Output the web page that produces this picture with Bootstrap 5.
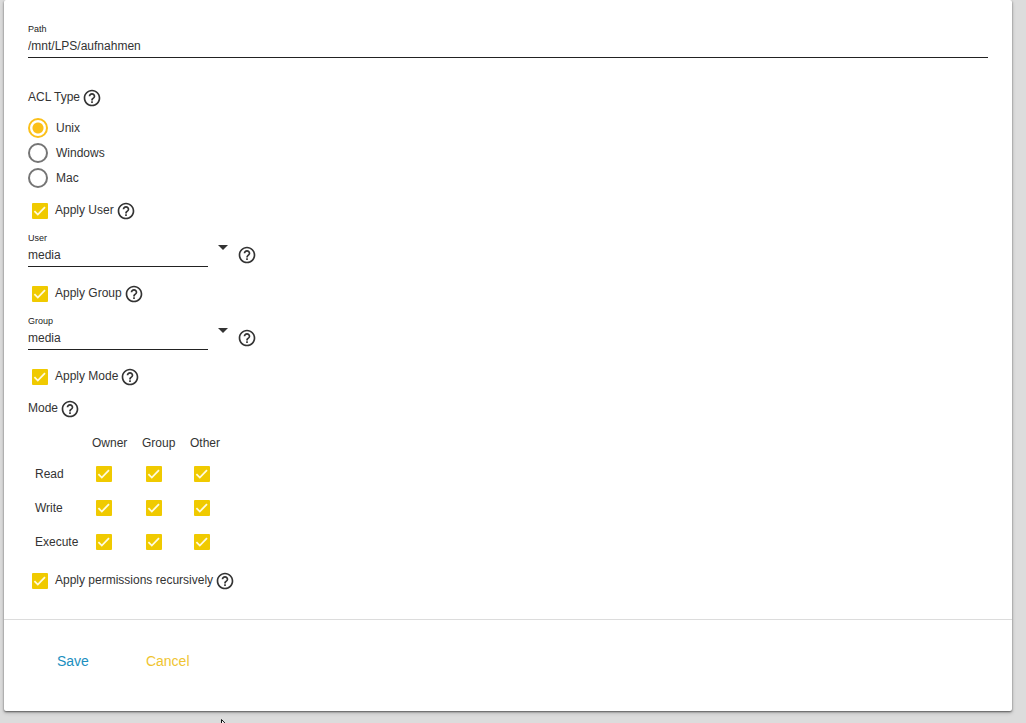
<!DOCTYPE html>
<html lang="en">
<head>
<meta charset="utf-8">
<meta name="viewport" content="width=device-width, initial-scale=1">
<title>Edit Permissions</title>
<link href="https://cdn.jsdelivr.net/npm/bootstrap@5.3.0/dist/css/bootstrap.min.css" rel="stylesheet">
<style>
  body { background: #dcdcdc; color: #333; font-family: "Liberation Sans", Arial, sans-serif; font-size: 12px; line-height: 18px; }
  .panel { margin: 0 14px 0 4px; border: 0; border-radius: 2px; color: #333; box-shadow: 0 1px 2px rgba(0,0,0,.55), 0 2px 4px rgba(0,0,0,.16); }
  .panel-main { padding: 23px 24px 28px; }
  .field-label { display: block; font-size: 9px; line-height: 12px; margin-bottom: 1px; color: #222; }
  .line-input { display: block; width: 100%; height: 22px; padding: 0 0 2px; border: 0; border-bottom: 1px solid #222; border-radius: 0; background: transparent; color: #333; outline: 0; }
  .combo { width: 180px; }
  .caret-btn { width: 10px; height: 5px; margin: 13px 0 0 10px; }
  .combo-row { margin: 11px 0 17px; }
  .combo-row .help { margin: 13px 0 0 9px; }
  .plain { border: 0; padding: 0; background: none; color: inherit; display: block; line-height: 0; }
  .help { width: 20px; height: 20px; margin-left: 2px; color: #333; }
  .opt-row { height: 20px; }
  .acl-row { margin: 30px 0 8px; }
  .acl-options { margin-bottom: 10px; }
  .radio-row { height: 25px; gap: 8px; }
  .radio-row label { line-height: 24px; }
  .radio-row .form-check-input { width: 20px; height: 20px; margin: 2px 0 0; border: 2px solid #757575; box-shadow: none; }
  .radio-row .form-check-input:checked { border-color: #fbc01a; background: radial-gradient(circle, #fbc01a 5px, #fff 6px); }
  .tick.form-check-input { display: block; flex: none; float: none; width: 16px; height: 16px; margin: 2px 7px 0 4px; border: 0; border-radius: 1px; box-shadow: none; }
  .tick.form-check-input:checked { background: #f0ca00 url("data:image/svg+xml,%3Csvg xmlns='http://www.w3.org/2000/svg' viewBox='0 0 24 24'%3E%3Cpath fill='none' stroke='%23fffbe0' stroke-width='2.7' d='M3.6 12.200 8.700 17.300 19.500 6.200'/%3E%3C/svg%3E") center / 16px 16px no-repeat; }
  .mode-row { margin: 12px 0 10px; }
  .perm-table { border-collapse: collapse; margin-bottom: 12px; }
  .perm-table th, .perm-table td { padding: 0; height: 34px; font-weight: 400; text-align: left; vertical-align: middle; }
  .perm-table thead th, .perm-table thead td { height: 28px; }
  .perm-table tbody th { padding-left: 7px; }
  .perm-table .tick { margin-top: 0; margin-bottom: 0; }
  .col-name { width: 64px; } .col-owner { width: 50px; } .col-group { width: 48px; } .col-other { width: 40px; }
  .panel-foot { border-top: 1px solid #dcdcdc; padding: 23px 37px 32px; gap: 25px; }
  .panel-foot .btn { height: 36px; padding: 0 16px; border: 0; font-size: 14px; line-height: 36px; }
  .save { color: #1c8fc0; } .cancel { color: #efc431; }
  .pointer { position: absolute; left: 217px; top: 100%; margin-top: 8px; }
</style>
</head>
<body>
<svg class="d-none">
  <symbol id="help" viewBox="0 0 24 24"><path fill="currentColor" d="M11 18h2v-2h-2v2zm1-16C6.480 2 2 6.480 2 12s4.480 10 10 10 10-4.480 10-10S17.520 2 12 2zm0 18c-4.410 0-8-3.590-8-8s3.590-8 8-8 8 3.590 8 8-3.590 8-8 8zm0-14c-2.210 0-4 1.790-4 4h2c0-1.100.9-2 2-2s2 .9 2 2c0 2-3 1.750-3 5h2c0-2.250 3-2.500 3-5 0-2.210-1.790-4-4-4z"/></symbol>
  <symbol id="caret" viewBox="0 0 10 5"><path fill="currentColor" d="M0 0h10L5 5z"/></symbol>
</svg>
<div class="overflow-hidden min-vh-100">
<form class="card panel">
  <div class="panel-main">
    <label class="field-label" for="path">Path</label>
    <input class="line-input" id="path" type="text" value="/mnt/LPS/aufnahmen">

    <div class="d-flex opt-row acl-row"><span id="acl">ACL Type</span><button type="button" class="plain help" aria-label="Help"><svg width="20" height="20"><use href="#help"/></svg></button></div>
    <div class="acl-options" role="radiogroup" aria-labelledby="acl">
      <div class="d-flex radio-row"><input class="form-check-input" type="radio" name="acl" id="unix" checked><label for="unix">Unix</label></div>
      <div class="d-flex radio-row"><input class="form-check-input" type="radio" name="acl" id="windows"><label for="windows">Windows</label></div>
      <div class="d-flex radio-row"><input class="form-check-input" type="radio" name="acl" id="mac"><label for="mac">Mac</label></div>
    </div>

    <div class="d-flex opt-row"><input class="form-check-input tick" type="checkbox" id="apply-user" checked><label for="apply-user">Apply User</label><button type="button" class="plain help" aria-label="Help"><svg width="20" height="20"><use href="#help"/></svg></button></div>
    <div class="d-flex combo-row">
      <div class="combo"><label class="field-label" for="user">User</label><input class="line-input" id="user" type="text" value="media"></div>
      <button type="button" class="plain caret-btn" aria-label="Show users"><svg class="d-block" width="10" height="5"><use href="#caret"/></svg></button>
      <button type="button" class="plain help" aria-label="Help"><svg width="20" height="20"><use href="#help"/></svg></button>
    </div>

    <div class="d-flex opt-row"><input class="form-check-input tick" type="checkbox" id="apply-group" checked><label for="apply-group">Apply Group</label><button type="button" class="plain help" aria-label="Help"><svg width="20" height="20"><use href="#help"/></svg></button></div>
    <div class="d-flex combo-row">
      <div class="combo"><label class="field-label" for="group">Group</label><input class="line-input" id="group" type="text" value="media"></div>
      <button type="button" class="plain caret-btn" aria-label="Show groups"><svg class="d-block" width="10" height="5"><use href="#caret"/></svg></button>
      <button type="button" class="plain help" aria-label="Help"><svg width="20" height="20"><use href="#help"/></svg></button>
    </div>

    <div class="d-flex opt-row"><input class="form-check-input tick" type="checkbox" id="apply-mode" checked><label for="apply-mode">Apply Mode</label><button type="button" class="plain help" aria-label="Help"><svg width="20" height="20"><use href="#help"/></svg></button></div>
    <div class="d-flex opt-row mode-row"><span>Mode</span><button type="button" class="plain help" aria-label="Help"><svg width="20" height="20"><use href="#help"/></svg></button></div>

    <table class="perm-table">
      <colgroup><col class="col-name"><col class="col-owner"><col class="col-group"><col class="col-other"></colgroup>
      <thead><tr><td></td><th scope="col">Owner</th><th scope="col">Group</th><th scope="col">Other</th></tr></thead>
      <tbody>
        <tr><th scope="row">Read</th><td><input class="form-check-input tick" type="checkbox" aria-label="Owner read" checked></td><td><input class="form-check-input tick" type="checkbox" aria-label="Group read" checked></td><td><input class="form-check-input tick" type="checkbox" aria-label="Other read" checked></td></tr>
        <tr><th scope="row">Write</th><td><input class="form-check-input tick" type="checkbox" aria-label="Owner write" checked></td><td><input class="form-check-input tick" type="checkbox" aria-label="Group write" checked></td><td><input class="form-check-input tick" type="checkbox" aria-label="Other write" checked></td></tr>
        <tr><th scope="row">Execute</th><td><input class="form-check-input tick" type="checkbox" aria-label="Owner execute" checked></td><td><input class="form-check-input tick" type="checkbox" aria-label="Group execute" checked></td><td><input class="form-check-input tick" type="checkbox" aria-label="Other execute" checked></td></tr>
      </tbody>
    </table>

    <div class="d-flex opt-row"><input class="form-check-input tick" type="checkbox" id="recursive" checked><label for="recursive">Apply permissions recursively</label><button type="button" class="plain help" aria-label="Help"><svg width="20" height="20"><use href="#help"/></svg></button></div>
  </div>
  <div class="d-flex panel-foot">
    <button type="button" class="btn save">Save</button>
    <button type="button" class="btn cancel">Cancel</button>
  </div>
  <svg class="pointer" width="12" height="19" viewBox="0 0 12 19" aria-hidden="true"><path fill="#fff" stroke="#111" d="M.5.5v15l3.500-3.500 2.500 6 2-1-2.500-5.500h5z"/></svg>
</form>
</div>
<script src="https://cdn.jsdelivr.net/npm/bootstrap@5.3.0/dist/js/bootstrap.bundle.min.js"></script>
</body>
</html>
